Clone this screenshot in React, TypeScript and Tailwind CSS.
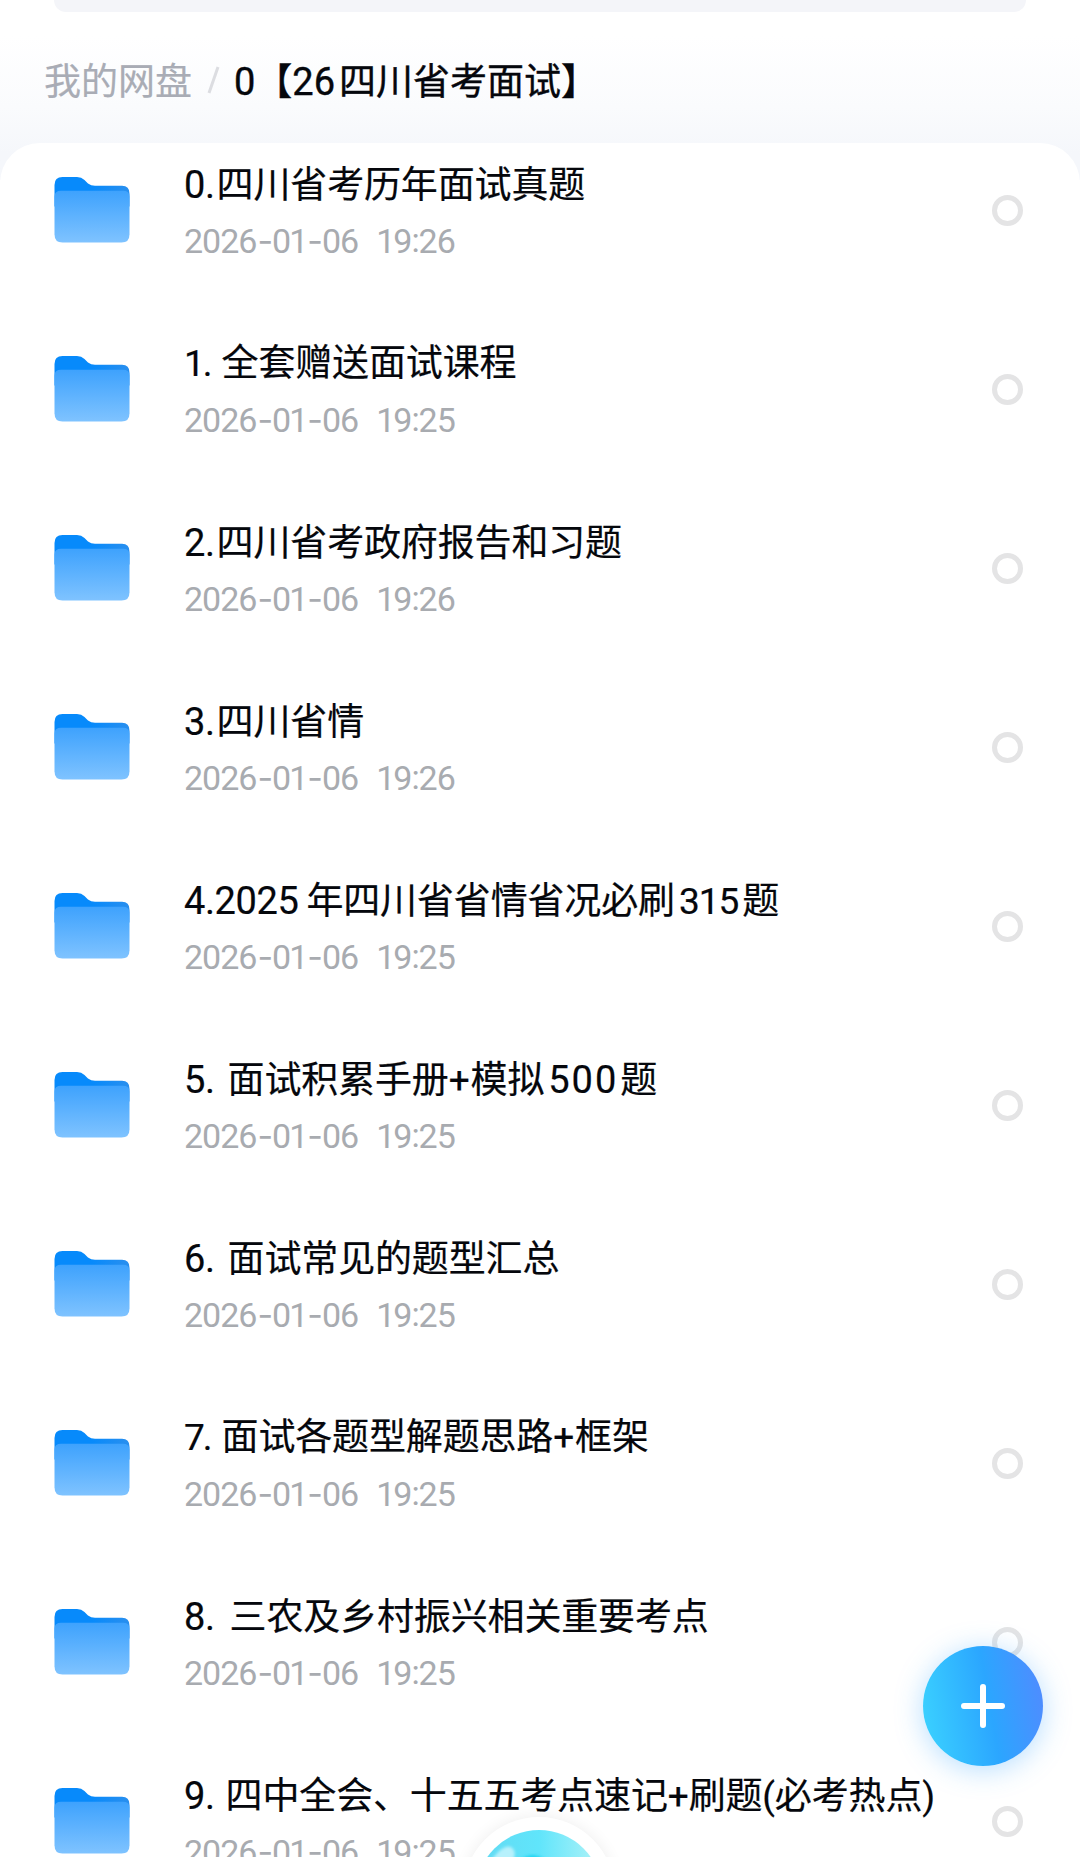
import React from "react";

type Run = { text: string; cls?: string };
type Entry = { runs: Run[]; time: string };

const num = "text-[38px] tracking-[-0.4px]";

const entries: Entry[] = [
  { runs: [{ text: "0.", cls: num }, { text: "四川省考历年面试真题", cls: "ml-[2px]" }], time: "19:26" },
  { runs: [{ text: "1.", cls: "tracking-[-2px]" }, { text: "全套赠送面试课程", cls: "ml-[11px]" }], time: "19:25" },
  { runs: [{ text: "2.", cls: num }, { text: "四川省考政府报告和习题", cls: "ml-[2px]" }], time: "19:26" },
  { runs: [{ text: "3.", cls: num }, { text: "四川省情", cls: "ml-[2px]" }], time: "19:26" },
  {
    runs: [
      { text: "4.2025", cls: num },
      { text: "年四川省省情省况必刷", cls: "ml-[8px]" },
      { text: "315", cls: "ml-[4px] tracking-[-1px]" },
      { text: "题", cls: "ml-[4px]" },
    ],
    time: "19:25",
  },
  {
    runs: [
      { text: "5.", cls: num },
      { text: "面试积累手册", cls: "ml-[13px]" },
      { text: "+" },
      { text: "模拟", cls: "ml-[1px]" },
      { text: "500", cls: "ml-[4px] text-[38px] tracking-[2px]" },
      { text: "题", cls: "ml-[2px]" },
    ],
    time: "19:25",
  },
  { runs: [{ text: "6.", cls: num }, { text: "面试常见的题型汇总", cls: "ml-[13px]" }], time: "19:25" },
  { runs: [{ text: "7.", cls: "tracking-[-2px]" }, { text: "面试各题型解题思路", cls: "ml-[11px]" }, { text: "+" }, { text: "框架", cls: "ml-[1px]" }], time: "19:25" },
  { runs: [{ text: "8.", cls: num }, { text: "三农及乡村振兴相关重要考点", cls: "ml-[15px]" }], time: "19:25" },
  {
    runs: [
      { text: "9.", cls: num },
      { text: "四中全会、十五五考点速记", cls: "ml-[11px]" },
      { text: "+" },
      { text: "刷题" },
      { text: "(" },
      { text: "必考热点" },
      { text: ")" },
    ],
    time: "19:25",
  },
];

function Folder() {
  return (
    <svg viewBox="0 0 76 67" className="-mt-px ml-[54px] h-[66px] w-[76px] shrink-0" preserveAspectRatio="none">
      <defs>
        <linearGradient id="front" x1="0" y1="0" x2="0" y2="1">
          <stop offset="0" stopColor="#3ea2fd" />
          <stop offset="1" stopColor="#7fc3ff" />
        </linearGradient>
        <linearGradient id="back" x1="0" y1="0" x2="1" y2="0">
          <stop offset="0.5" stopColor="#078afb" />
          <stop offset="1" stopColor="#2a8fee" />
        </linearGradient>
      </defs>
      <path d="M0.500 26V8Q0.500 0 8.500 0H23Q27.500 0 30.500 3L34 6.500Q37 9 41 9H68Q75.500 9 75.500 17V30H0.500Z" fill="url(#back)" />
      <path d="M0.500 20Q0.500 14 7 14H69Q75.500 14 75.500 20V58Q75.500 66.500 67.500 66.500H8.500Q0.500 66.500 0.500 58Z" fill="url(#front)" />
    </svg>
  );
}

function DateLine({ time }: { time: string }) {
  const [h, m] = time.split(":");
  const dash = <span className="ml-px font-['Inter']">-</span>;
  return (
    <div className="mt-[11px] flex h-10 items-baseline text-[34px] leading-10 tracking-[-1px] text-[#a8abb0]">
      <span>2026</span>
      {dash}
      <span className="tracking-[-2px]">01</span>
      {dash}
      <span>06</span>
      <span className="ml-[18px] tracking-[-2px]">{h}</span>
      <span className="relative -top-[1px] ml-px">:</span>
      <span>{m}</span>
    </div>
  );
}

function Row({ entry }: { entry: Entry }) {
  return (
    <li className="mb-[63px] flex h-[116px] items-center">
      <Folder />
      <div className="ml-[54px] flex-1 self-start pt-[8px] whitespace-nowrap">
        <div className="flex h-[50px] items-baseline text-[37px] leading-[50px] tracking-[-0.15px] text-[#05070c] [-webkit-text-stroke:0.2px_#05070c]">
          {entry.runs.map((r, i) => (
            <span key={i} className={r.cls}>{r.text}</span>
          ))}
        </div>
        <DateLine time={entry.time} />
      </div>
      <span className="mr-[57px] size-[31px] rounded-full border-[5px] border-[#e4e4e5]" />
    </li>
  );
}

export default function App() {
  return (
    <main className="relative h-[1857px] w-[1080px] overflow-hidden bg-white font-['Roboto','Noto_Sans_CJK_SC',sans-serif]">
      <header className="flex h-[180px] flex-col bg-linear-to-b from-white from-20% via-[#fafbfd] via-60% to-[#f5f7fb] to-85%">
        <div className="mx-[54px] h-3 rounded-b-[20px] bg-[#f4f5f9]" />
        <nav className="ml-[44px] mt-[43px] flex h-[54px] items-baseline text-[37px] leading-[54px] whitespace-nowrap text-[#05070c]">
          <span className="text-[#a9acb5] [-webkit-text-stroke:0.2px_#a9acb5]">我的网盘</span>
          <svg viewBox="0 0 14 30" className="ml-[15px] h-[30px] w-[14px]">
            <path d="M2 28L11 2" stroke="#dcdde1" strokeWidth="3" />
          </svg>
          <span className="ml-[13px] text-[38px] [-webkit-text-stroke:0.4px_#05070c]">0</span>
          <span className="[-webkit-text-stroke:0.4px_#05070c]">【</span>
          <span className="text-[38px] [-webkit-text-stroke:0.4px_#05070c]">26</span>
          <span className="ml-[4px] [-webkit-text-stroke:0.4px_#05070c]">四川省考面试】</span>
        </nav>
      </header>

      <ul className="-mt-[37px] h-[1714px] rounded-t-[40px] bg-white pt-[9px]">
        {entries.map((e, i) => (
          <Row key={i} entry={e} />
        ))}
      </ul>

      <button
        aria-label="新建"
        className="absolute left-[923px] top-[1646px] flex size-[120px] items-center justify-center rounded-full bg-linear-[80deg,#3bd2ff_3%,#2ba6ff_55%,#4f8cff_95%] shadow-[0_4px_28px_rgba(50,160,255,0.35)]"
      >
        <svg viewBox="0 0 44 44" className="size-[44px]">
          <path d="M22 3V41M3 22H41" stroke="white" strokeWidth="6" strokeLinecap="round" />
        </svg>
      </button>

      <div className="absolute left-[463px] top-[1817px] size-[152px] rounded-full bg-white p-[13px] shadow-[0_0_16px_rgba(0,0,0,0.07)]">
        <svg viewBox="0 0 126 126" className="size-[126px]">
          <defs>
            <linearGradient id="orb" x1="0" y1="0" x2="1" y2="0">
              <stop offset="0.1" stopColor="#62dcf4" />
              <stop offset="0.5" stopColor="#60e5fb" />
              <stop offset="0.9" stopColor="#a2f0f8" />
            </linearGradient>
            <filter id="soft" x="-20%" y="-20%" width="140%" height="140%">
              <feGaussianBlur stdDeviation="1.5" />
            </filter>
          </defs>
          <circle cx="63" cy="63" r="63" fill="url(#orb)" />
          <path d="M14 32Q27 14 35 17Q42 22 36 32Z" fill="#b7f1fc" filter="url(#soft)" />
          <path d="M40 34Q56 16 74 34Z" fill="#20d5f2" filter="url(#soft)" />
        </svg>
      </div>
    </main>
  );
}
